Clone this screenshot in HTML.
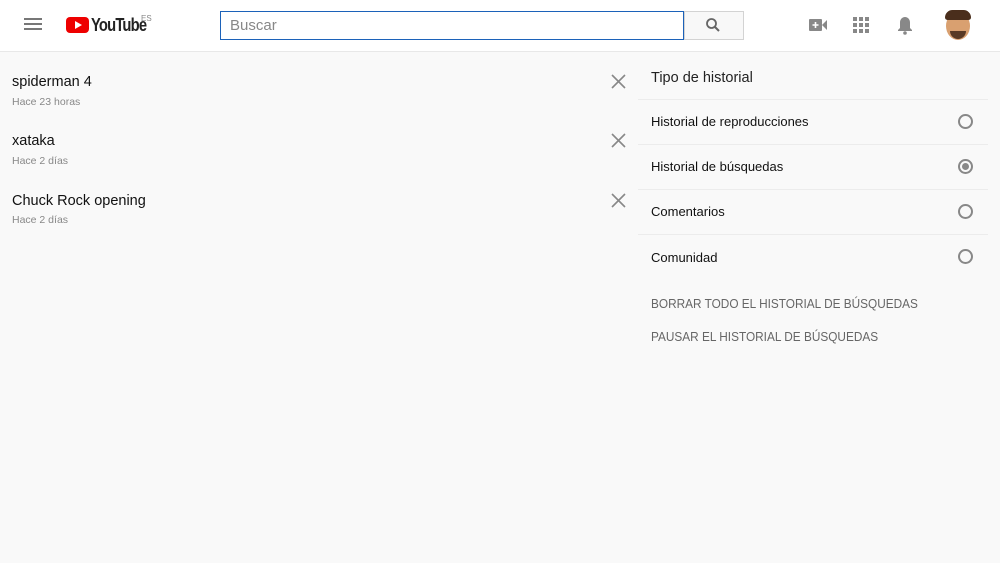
<!DOCTYPE html><html><head><style>
body{margin:0;width:1000px;height:563px;background:#f9f9f9;font-family:"Liberation Sans",sans-serif;position:relative;overflow:hidden}
.hd{position:absolute;left:0;top:0;width:1000px;height:51px;background:#fff;border-bottom:1px solid #e8e8e8}
.a{position:absolute}
.t{font-size:14.5px;color:#111}
.s{font-size:10.5px;color:#888}
.x{position:absolute;left:611px;width:15px;height:15px}
.r{position:absolute;left:958px;width:11px;height:11px;border:2px solid #888;border-radius:50%}
.line{position:absolute;left:638px;width:350px;height:1px;background:#ececec}
.rt{position:absolute;left:651px;font-size:13px;color:#111}
.b{position:absolute;left:651px;font-size:12.5px;color:#666;transform:scaleX(.945);transform-origin:left}
</style></head><body>
<div class="hd">
<div class="a" style="left:24px;top:18px;width:18px;height:2px;background:#777;box-shadow:0 5px #777,0 10px #777"></div>
<div class="a" style="left:66px;top:17px;width:23px;height:16px;background:#e00;border-radius:4px"></div>
<div class="a" style="left:75px;top:21px;width:0;height:0;border-left:7px solid #fff;border-top:4px solid transparent;border-bottom:4px solid transparent"></div>
<div class="a" style="left:91px;top:15px;font-size:18px;font-weight:bold;letter-spacing:-1px;color:#222;transform:scaleX(.82);transform-origin:left">YouTube</div>
<div class="a" style="left:141px;top:14px;font-size:8px;color:#888">ES</div>
<div class="a" style="left:220px;top:11px;width:462px;height:27px;border:1px solid #1c62b9;background:#fff"></div>
<div class="a" style="left:230px;top:17px;font-size:15px;color:#888">Buscar</div>
<div class="a" style="left:684px;top:11px;width:58px;height:27px;border:1px solid #d3d3d3;background:#f8f8f8"></div>
<svg class="a" style="left:705px;top:17px" width="16" height="16"><circle cx="6.5" cy="6.5" r="4.5" fill="none" stroke="#666" stroke-width="1.8"/><line x1="10" y1="10" x2="14" y2="14" stroke="#666" stroke-width="2"/></svg>
<svg class="a" style="left:808px;top:17px" width="20" height="16"><rect x="1" y="2" width="13" height="12" rx="1" fill="#888"/><polygon points="14,8 19,3 19,13" fill="#888"/><path d="M7.5 5v6M4.5 8h6" stroke="#fff" stroke-width="1.6"/></svg>
<svg class="a" style="left:853px;top:17px" width="16" height="16" fill="#888"><rect x="0" y="0" width="4" height="4"/><rect x="6" y="0" width="4" height="4"/><rect x="12" y="0" width="4" height="4"/><rect x="0" y="6" width="4" height="4"/><rect x="6" y="6" width="4" height="4"/><rect x="12" y="6" width="4" height="4"/><rect x="0" y="12" width="4" height="4"/><rect x="6" y="12" width="4" height="4"/><rect x="12" y="12" width="4" height="4"/></svg>
<svg class="a" style="left:897px;top:16px" width="16" height="19"><path d="M8 1c-3 0-5 2.5-5 5.5V12L1 14v1h14v-1l-2-2V6.5C13 3.5 11 1 8 1z" fill="#888"/><circle cx="8" cy="17" r="1.8" fill="#888"/></svg>
<div class="a" style="left:946px;top:12px;width:24px;height:28px;border-radius:50%;background:#d9a070"></div>
<div class="a" style="left:945px;top:10px;width:26px;height:10px;border-radius:12px 12px 4px 4px;background:#4a2e1c"></div>
<div class="a" style="left:950px;top:31px;width:16px;height:8px;border-radius:0 0 8px 8px;background:#5a3a25"></div>
</div>
<div class="a t" style="left:12px;top:74px">spiderman 4</div><div class="a s" style="left:12px;top:96px">Hace 23 horas</div>
<div class="a t" style="left:12px;top:133px">xataka</div><div class="a s" style="left:12px;top:155px">Hace 2 días</div>
<div class="a t" style="left:12px;top:193px">Chuck Rock opening</div><div class="a s" style="left:12px;top:214px">Hace 2 días</div>
<svg class="x" style="top:74px"><path d="M1 1L14 14M14 1L1 14" stroke="#888" stroke-width="1.6"/></svg>
<svg class="x" style="top:133px"><path d="M1 1L14 14M14 1L1 14" stroke="#888" stroke-width="1.6"/></svg>
<svg class="x" style="top:193px"><path d="M1 1L14 14M14 1L1 14" stroke="#888" stroke-width="1.6"/></svg>
<div class="a" style="left:651px;top:70px;font-size:14.5px;color:#222">Tipo de historial</div>
<div class="line" style="top:99px"></div>
<div class="rt" style="top:114px">Historial de reproducciones</div><div class="r" style="top:114px"></div>
<div class="line" style="top:144px"></div>
<div class="rt" style="top:159px">Historial de búsquedas</div><div class="r" style="top:159px"></div><div class="a" style="left:962px;top:163px;width:7px;height:7px;border-radius:50%;background:#888"></div>
<div class="line" style="top:189px"></div>
<div class="rt" style="top:204px">Comentarios</div><div class="r" style="top:204px"></div>
<div class="line" style="top:234px"></div>
<div class="rt" style="top:250px">Comunidad</div><div class="r" style="top:249px"></div>
<div class="b" style="top:297px">BORRAR TODO EL HISTORIAL DE BÚSQUEDAS</div>
<div class="b" style="top:330px">PAUSAR EL HISTORIAL DE BÚSQUEDAS</div>
</body></html>
